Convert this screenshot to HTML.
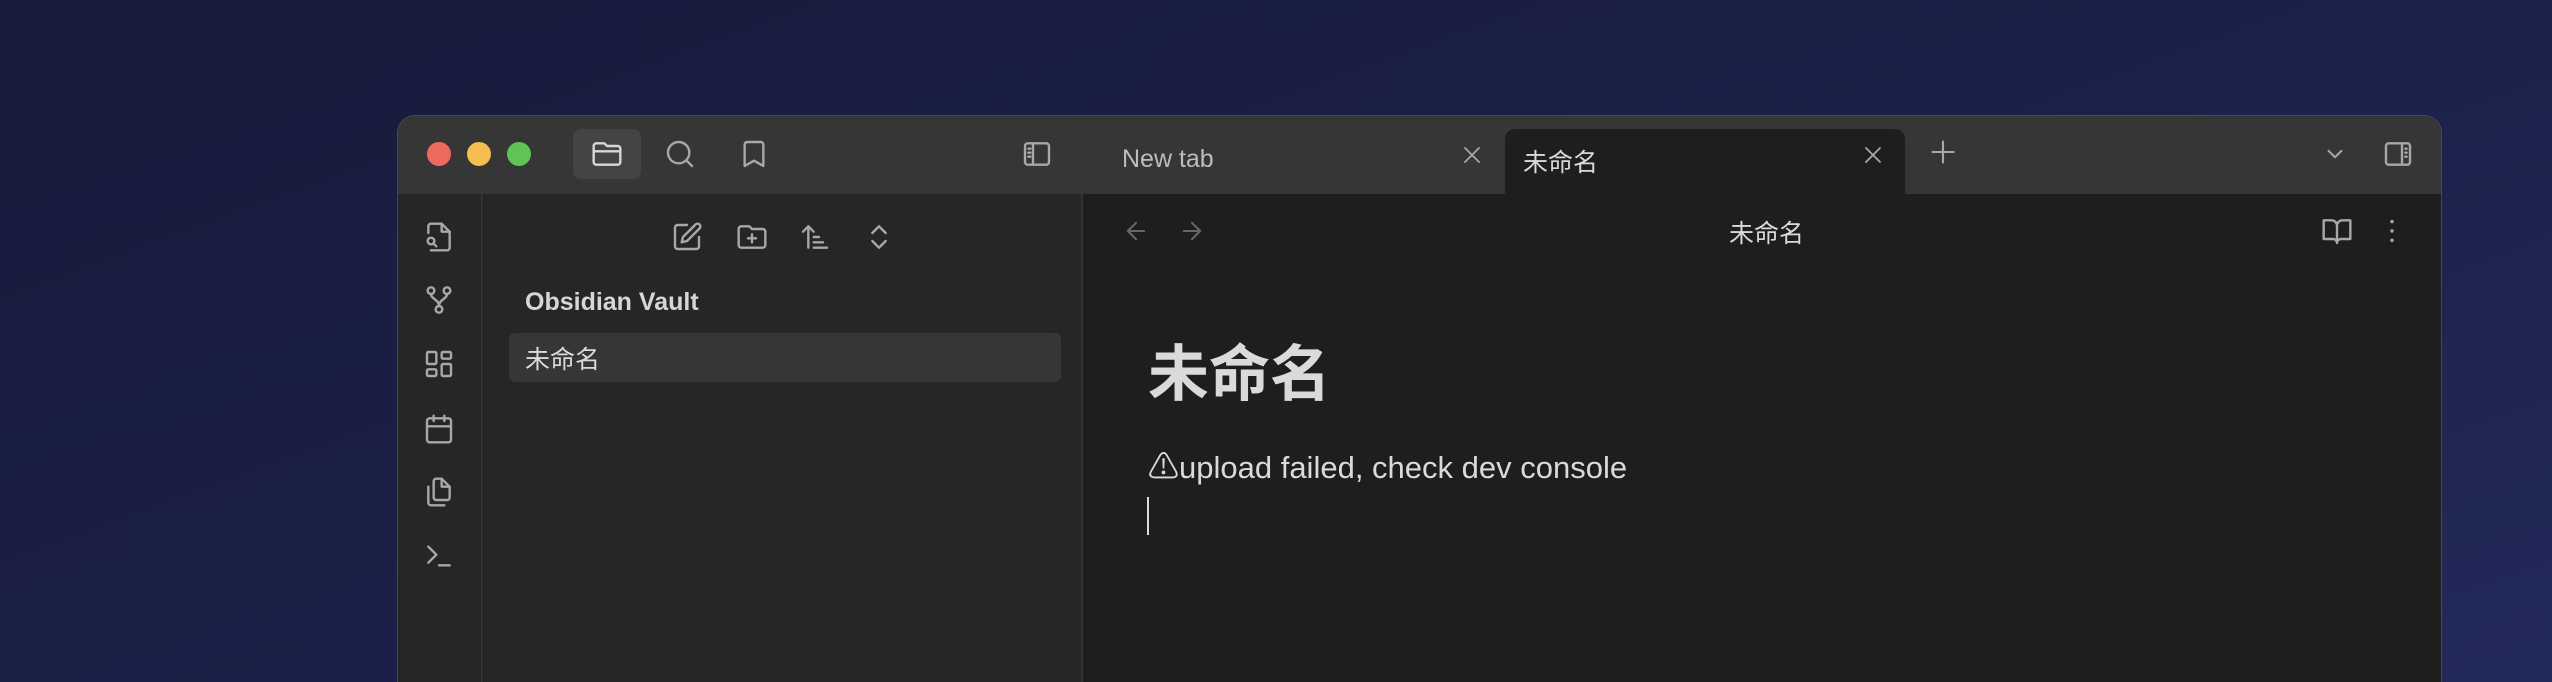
<!DOCTYPE html>
<html><head><meta charset="utf-8"><style>
*{margin:0;padding:0;box-sizing:border-box}
html,body{width:2552px;height:682px;overflow:hidden}
body{background:linear-gradient(160deg,#171b3c 0%,#1b2048 50%,#222a5a 100%);font-family:"Liberation Sans","Noto Sans CJK SC",sans-serif;position:relative}
.win{position:absolute;left:397px;top:115px;width:2045px;height:567px;border-radius:18px 18px 0 0;overflow:hidden;background:#1e1e1e;border:1px solid #4a4a4a;border-bottom:none}
.tb{position:absolute;left:0;top:0;width:100%;height:78px;background:#363636}
.dot{position:absolute;top:26px;width:24px;height:24px;border-radius:50%}
.ic{position:absolute;fill:none;stroke:#a8a8a8;stroke-width:1.8;stroke-linecap:round;stroke-linejoin:round}
.rib{position:absolute;left:0;top:78px;width:85px;height:489px;background:#262626;border-right:2px solid #333}
.side{position:absolute;left:86px;top:78px;width:599px;height:489px;background:#262626;border-right:2px solid #333}
.t{position:absolute;color:#dadada;white-space:nowrap}
</style></head><body>
<div class="win">
<div class="tb"></div>
<div class="dot" style="left:29px;background:#ef6a5e"></div>
<div class="dot" style="left:69px;background:#f5be4f"></div>
<div class="dot" style="left:109px;background:#5fc453"></div>
<div style="position:absolute;left:175px;top:13px;width:68px;height:50px;border-radius:8px;background:#444"></div>
<svg class="ic" style="left:193px;top:22px;stroke:#d8d8d8" width="32" height="32" viewBox="0 0 24 24"><path d="M4 20h16a2 2 0 0 0 2-2V8a2 2 0 0 0-2-2h-8l-2-2H4a2 2 0 0 0-2 2v12a2 2 0 0 0 2 2zM2 10h20"/></svg>
<svg class="ic" style="left:266px;top:22px" width="32" height="32" viewBox="0 0 24 24"><circle cx="11" cy="11" r="8"/><path d="m21 21-4.3-4.3"/></svg>
<svg class="ic" style="left:340px;top:22px" width="32" height="32" viewBox="0 0 24 24"><path d="m19 21-7-4-7 4V5a2 2 0 0 1 2-2h10a2 2 0 0 1 2 2v16z"/></svg>
<svg class="ic" style="left:623px;top:22px" width="32" height="32" viewBox="0 0 24 24"><rect x="3" y="4" width="18" height="16" rx="2"/><path d="M9 4v16M5.5 8h1.5M5.5 11h1.5M5.5 14h1.5"/></svg>
<div class="t" style="left:724px;top:29px;font-size:25px;color:#bdbdbd">New tab</div>
<svg class="ic" style="left:1062px;top:27px" width="24" height="24" viewBox="0 0 24 24"><path d="M5 5l14 14M19 5 5 19"/></svg>
<div style="position:absolute;left:1107px;top:13px;width:400px;height:66px;background:#1e1e1e;border-radius:10px 10px 0 0"></div>
<div class="t" style="left:1125px;top:27px;font-size:25px">未命名</div>
<svg class="ic" style="left:1463px;top:27px" width="24" height="24" viewBox="0 0 24 24"><path d="M5 5l14 14M19 5 5 19"/></svg>
<svg class="ic" style="left:1531px;top:22px" width="28" height="28" viewBox="0 0 24 24"><path d="M12 3v18M3 12h18"/></svg>
<svg class="ic" style="left:1924px;top:25px" width="26" height="26" viewBox="0 0 24 24"><path d="m6 9 6 6 6-6"/></svg>
<svg class="ic" style="left:1984px;top:22px" width="32" height="32" viewBox="0 0 24 24"><rect x="3" y="4" width="18" height="16" rx="2"/><path d="M15 4v16M17.5 8h1M17.5 11h1M17.5 14h1"/></svg>
<div class="rib"></div>
<div class="side"></div>
<svg class="ic" style="left:25px;top:105px" width="32" height="32" viewBox="0 0 24 24"><path d="M4 9V4a2 2 0 0 1 2-2h8l6 6v12a2 2 0 0 1-2 2H6"/><path d="M14 2v6h6"/><circle cx="6" cy="15" r="2.5"/><path d="m8 17 2 2"/></svg>
<svg class="ic" style="left:25px;top:168px" width="32" height="32" viewBox="0 0 24 24"><circle cx="6" cy="5" r="2.5"/><circle cx="18" cy="5" r="2.5"/><circle cx="12" cy="19" r="2.5"/><path d="M6 7.5c0 4 6 4 6 9M18 7.5c0 4-6 4-6 9"/></svg>
<svg class="ic" style="left:25px;top:232px" width="32" height="32" viewBox="0 0 24 24"><rect x="3" y="3" width="7" height="9" rx="1"/><rect x="14" y="3" width="7" height="5" rx="1"/><rect x="14" y="12" width="7" height="9" rx="1"/><rect x="3" y="16" width="7" height="5" rx="1"/></svg>
<svg class="ic" style="left:25px;top:297px" width="32" height="32" viewBox="0 0 24 24"><rect x="3" y="4" width="18" height="18" rx="2"/><path d="M16 2v4M8 2v4M3 10h18"/></svg>
<svg class="ic" style="left:25px;top:360px" width="32" height="32" viewBox="0 0 24 24"><path d="M14 2H10a2 2 0 0 0-2 2v12a2 2 0 0 0 2 2h8a2 2 0 0 0 2-2V8z"/><path d="M14 2v6h6"/><path d="M4 8v12a2 2 0 0 0 2 2h10"/></svg>
<svg class="ic" style="left:25px;top:424px" width="32" height="32" viewBox="0 0 24 24"><path d="m4 17 6-6-6-6M12 19h8"/></svg>
<svg class="ic" style="left:273px;top:105px" width="32" height="32" viewBox="0 0 24 24"><path d="M12 3H5a2 2 0 0 0-2 2v14a2 2 0 0 0 2 2h14a2 2 0 0 0 2-2v-7"/><path d="M18.4 2.6a2.1 2.1 0 1 1 3 3L12 15l-4 1 1-4z"/></svg>
<svg class="ic" style="left:338px;top:105px" width="32" height="32" viewBox="0 0 24 24"><path d="M4 20h16a2 2 0 0 0 2-2V8a2 2 0 0 0-2-2h-8l-2-2H4a2 2 0 0 0-2 2v12a2 2 0 0 0 2 2z"/><path d="M12 10v6M9 13h6"/></svg>
<svg class="ic" style="left:401px;top:105px" width="32" height="32" viewBox="0 0 24 24"><path d="m3 8 4-4 4 4M7 4v16M11 12h4M11 16h7M11 20h10"/></svg>
<svg class="ic" style="left:465px;top:105px" width="32" height="32" viewBox="0 0 24 24"><path d="m7 15 5 5 5-5M7 9l5-5 5 5"/></svg>
<div class="t" style="left:127px;top:172px;font-size:25px;font-weight:bold;color:#d6d6d6">Obsidian Vault</div>
<div style="position:absolute;left:111px;top:217px;width:552px;height:49px;border-radius:6px;background:#363636"></div>
<div class="t" style="left:127px;top:224px;font-size:25px">未命名</div>
<svg class="ic" style="left:724px;top:101px;stroke:#666" width="28" height="28" viewBox="0 0 24 24"><path d="M19 12H5M12 19l-7-7 7-7"/></svg>
<svg class="ic" style="left:780px;top:101px;stroke:#666" width="28" height="28" viewBox="0 0 24 24"><path d="M5 12h14M12 5l7 7-7 7"/></svg>
<div class="t" style="left:1331px;top:98px;font-size:25px">未命名</div>
<svg class="ic" style="left:1923px;top:99px" width="32" height="32" viewBox="0 0 24 24"><path d="M2 4h6a4 4 0 0 1 4 4v13a3 3 0 0 0-3-3H2zM22 4h-6a4 4 0 0 0-4 4v13a3 3 0 0 1 3-3h7z"/></svg>
<svg class="ic" style="left:1978px;top:99px;stroke-width:2.6" width="32" height="32" viewBox="0 0 24 24"><path d="M12 5h.01M12 12h.01M12 19h.01"/></svg>
<div class="t" style="left:750px;top:218px;font-size:61px;font-weight:bold;line-height:80px">未命名</div>
<div class="t" style="left:750px;top:332px;font-size:31px;line-height:40px">⚠upload failed, check dev console</div>
<div style="position:absolute;left:749px;top:381px;width:2px;height:38px;background:#dadada"></div>
</div>
</body></html>
